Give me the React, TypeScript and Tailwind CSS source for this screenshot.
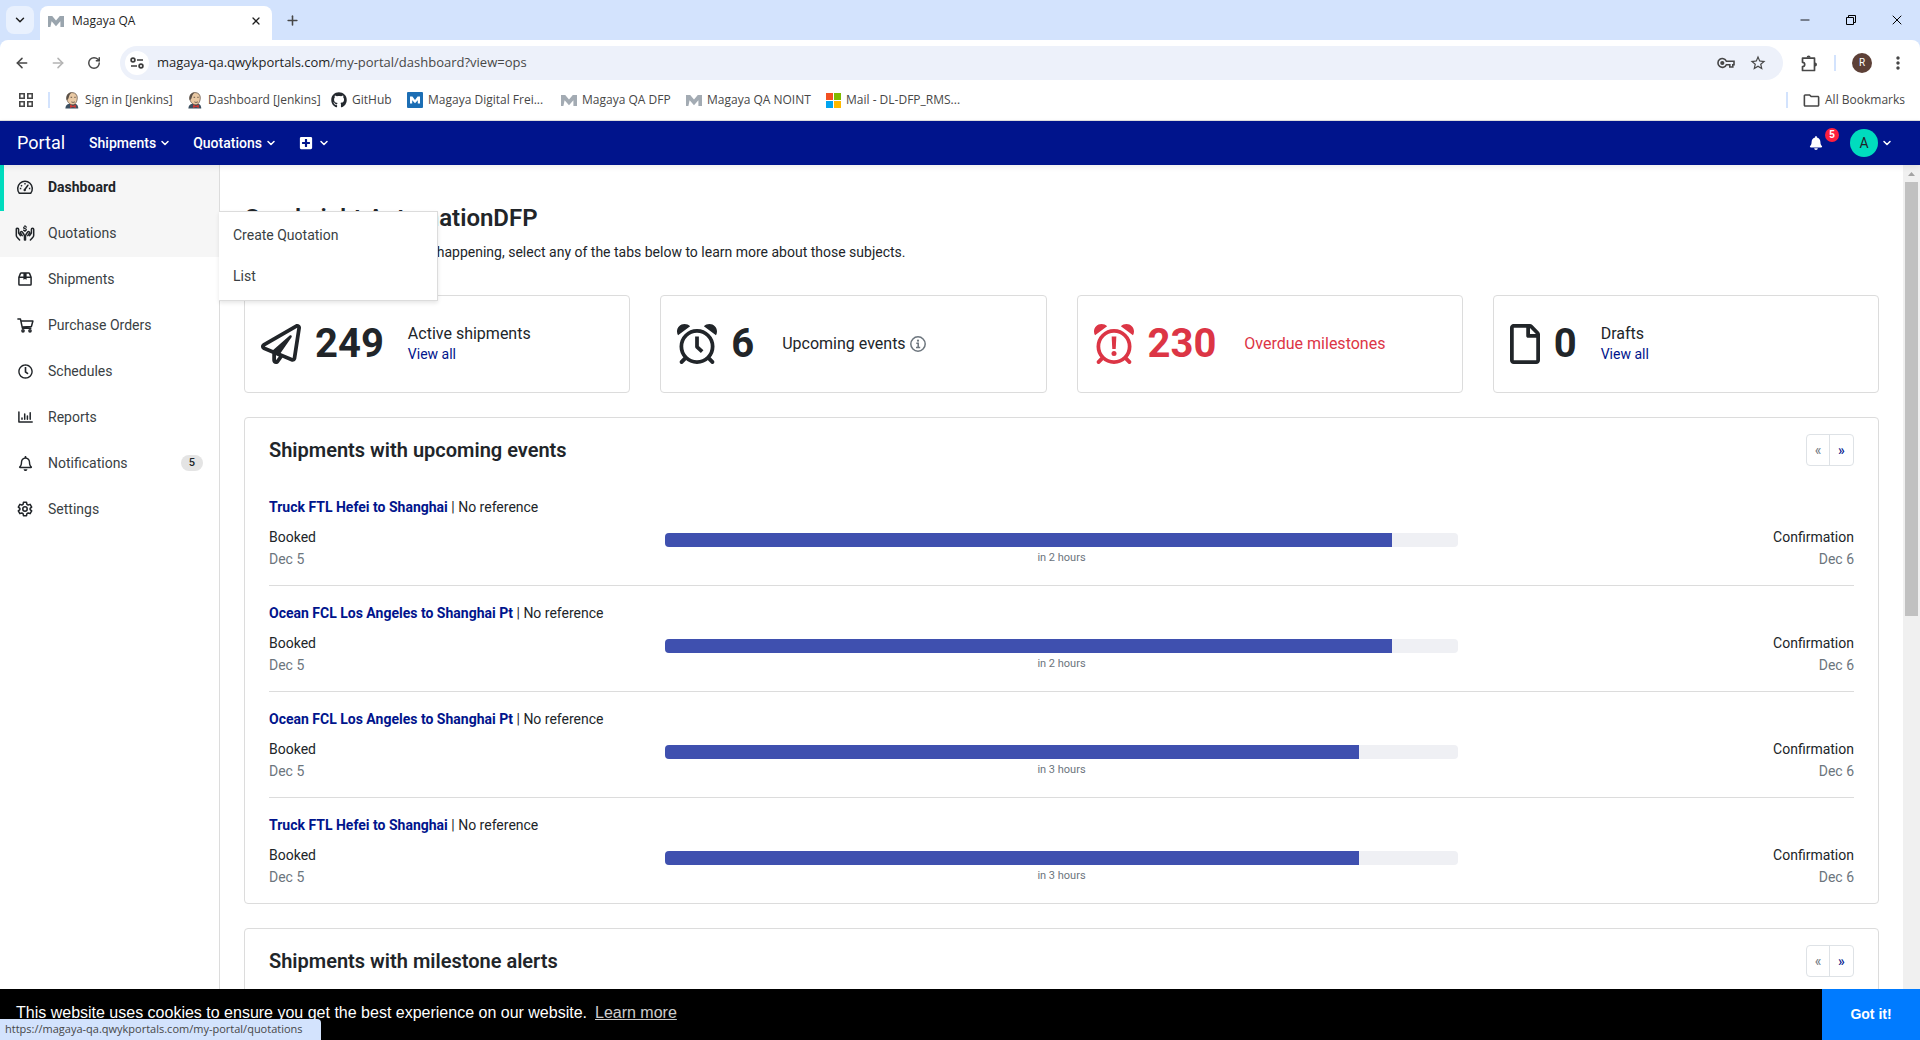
import React from "react";
import { ArrowLeft, ArrowRight, ChevronDown, Minus, Plus, RotateCw, X } from "lucide-react";
import { FaBell, FaGithub, FaPlusSquare, FaRegBell, FaRegClock, FaRegFile, FaRegPaperPlane } from "react-icons/fa";
import { MdMoreVert, MdOutlineFolder, MdStarBorder } from "react-icons/md";

type IconProps = { className?: string };

/* ---------- drawings ---------- */

function MagayaMark({ className = "" }: IconProps) {
  return (
    <svg viewBox="0 0 16 11" className={className} fill="currentColor" aria-hidden="true">
      <path d="M0 0h4.200L8 4.600 11.800 0H16v11h-3.600V5.200L8 10.200 3.600 5.200 2.400 11H0z" />
    </svg>
  );
}

function MagayaBox() {
  return (
    <svg viewBox="0 0 16 16" className="h-4 w-4" aria-hidden="true">
      <rect width="16" height="16" rx="1" fill="#1c6eb4" />
      <path d="M3 4.500h2.400L8 8l2.600-3.500H13v7h-2.200V8.200L8 11.300 5.200 8.200v3.300H3z" fill="#fff" />
    </svg>
  );
}

function Jenkins() {
  return (
    <svg viewBox="0 0 16 18" className="h-[17px] w-4" aria-hidden="true">
      <path d="M1 17.600c0-3 1.600-4.600 4.200-5.200l7 .4c1.700.8 2.400 2.600 2.400 4.800z" fill="#3b4f60" />
      <path d="M2.400 6C2.600 2.400 5 .6 8 .6c3.600 0 5.800 2.400 5.600 6-.2 3.400-2 7-4.800 7C5.200 13.600 2.300 9.800 2.400 6z" fill="#e9c9a4" stroke="#4d4036" strokeWidth=".7" />
      <path d="M2.300 8.500C1.600 4.200 3.400.9 7.600.6 5.600 2.400 4.900 4.200 4.500 6.200c-.3 1.300-1 2.300-2.200 2.300z" fill="#5a5048" />
      <path d="M6.500 5.600h1.600M10.400 5.600h1.500M7.400 10.500c1.200.7 2.600.6 3.600-.1" stroke="#4d4036" strokeWidth=".9" fill="none" />
      <path d="M6 13.200l3 1.500 3-1.500v3.800l-3-1.400L6 17z" fill="#d33833" />
    </svg>
  );
}

function MicrosoftSquares() {
  return (
    <svg viewBox="0 0 15 15" className="h-[15px] w-[15px]" aria-hidden="true">
      <path fill="#f25022" d="M0 0h7v7H0z" />
      <path fill="#7fba00" d="M8 0h7v7H8z" />
      <path fill="#00a4ef" d="M0 8h7v7H0z" />
      <path fill="#ffb900" d="M8 8h7v7H8z" />
    </svg>
  );
}

function AppsGrid() {
  return (
    <svg viewBox="0 0 14 14" className="h-3.5 w-3.5" fill="none" stroke="#474747" strokeWidth="1.600" aria-hidden="true">
      <path d="M.8.800h4.400v4.400H.8zM8.800.800h4.400v4.400H8.800zM.8 8.800h4.400v4.400H.8zM8.800 8.800h4.400v4.400H8.800z" />
    </svg>
  );
}

function SiteControls() {
  return (
    <svg viewBox="0 0 14 12" className="h-3 w-3.5" fill="none" stroke="#3c3c3c" strokeWidth="1.700" aria-hidden="true">
      <circle cx="3" cy="3" r="1.900" />
      <path d="M7 3h6M1 9h6" />
      <circle cx="11" cy="9" r="1.900" />
    </svg>
  );
}

function PasswordKey() {
  return (
    <svg viewBox="0 0 18 12" className="h-3 w-[18px]" fill="none" stroke="#474747" strokeWidth="1.600" aria-hidden="true">
      <path d="M9.400 4.200H17v3.500h-1.200V10h-3V7.700H9.400A4.400 4.400 0 1 1 9.400 4.200z" />
      <circle cx="5.300" cy="6" r="1.300" fill="#474747" />
    </svg>
  );
}

function PuzzlePiece() {
  return (
    <svg viewBox="0 0 17 17" className="h-[17px] w-[17px]" fill="none" stroke="#474747" strokeWidth="1.700" strokeLinejoin="round" aria-hidden="true">
      <path d="M1.500 3.200h12v12.300h-12v-3.800a2.200 2.200 0 0 0 0-4.400z" />
      <path d="M5.600 2.600a2 2 0 0 1 4 0zM14 7.400a2 2 0 0 1 0 4z" fill="#474747" stroke="none" />
    </svg>
  );
}

function GaugeIcon() {
  return (
    <svg viewBox="0 0 18 16" className="h-4 w-[18px]" fill="none" stroke="currentColor" strokeWidth="1.500" aria-hidden="true">
      <path d="M3.300 14.200A7.300 7.300 0 1 1 14.700 14.200z" strokeLinejoin="round" />
      <path d="M8.700 10.800l3.200-4.600" strokeLinecap="round" />
      <circle cx="8.700" cy="11" r="1.200" fill="currentColor" stroke="none" />
      <path d="M3.800 9.600h1.500M5 6.200l1 1M8.300 4.800h1.400M12.900 9.600h1.400" />
    </svg>
  );
}

function HandsDollarIcon() {
  return (
    <svg viewBox="0 0 20 16" className="h-4 w-5" fill="none" stroke="currentColor" strokeWidth="1.500" strokeLinecap="round" strokeLinejoin="round" aria-hidden="true">
      <path d="M3.600 8V4.200c0-1.400-2.300-1.400-2.300 0v6c0 1 .3 1.600 1 2.300L4.600 15M3.600 8l1.800 2.600M7.200 10.600L5.600 8.200c-.7-1.200.8-2.200 1.700-1.200l1.400 2c.6.900.8 1.500.8 2.500V15" />
      <path d="M16.400 8V4.200c0-1.400 2.300-1.400 2.300 0v6c0 1-.3 1.600-1 2.300L15.400 15M16.400 8l-1.800 2.600M12.800 10.600l1.600-2.400c.7-1.200-.8-2.200-1.700-1.200l-1.400 2c-.6.900-.8 1.500-.8 2.500V15" />
      <path d="M11.400 2.100c-.8-.6-2.800-.6-2.800.6s2.800.8 2.800 2-2 1.200-2.800.5M10 .7v.6M10 5.700v.7" strokeWidth="1.200" />
    </svg>
  );
}

function BoxIcon() {
  return (
    <svg viewBox="0 0 14 14" className="h-3.5 w-3.5" fill="none" stroke="currentColor" strokeWidth="1.500" strokeLinejoin="round" aria-hidden="true">
      <path d="M.9 5.200v7.100c0 .5.300.8.800.8h10.600c.5 0 .8-.3.800-.8V5.200L11.500 1.400a.9.900 0 0 0-.8-.5H3.300a.9.900 0 0 0-.8.5zM.9 5.200h12.200" />
      <path d="M5.400 1h3.200v6.800L7 6.900l-1.600.9z" fill="currentColor" stroke="none" />
    </svg>
  );
}

function CartIcon() {
  return (
    <svg viewBox="0 0 17 15" className="h-[15px] w-[17px]" fill="none" stroke="currentColor" strokeWidth="1.500" strokeLinejoin="round" strokeLinecap="round" aria-hidden="true">
      <path d="M.9.900h2.500l2 9.300h8.400M3.900 3h12l-1.500 5.500-9.300.4" />
      <circle cx="6" cy="12.800" r="1.100" />
      <circle cx="13" cy="12.800" r="1.100" />
    </svg>
  );
}

function ReportsIcon() {
  return (
    <svg viewBox="0 0 15 12" className="h-3 w-[15px]" fill="none" stroke="currentColor" strokeWidth="1.500" strokeLinecap="round" strokeLinejoin="round" aria-hidden="true">
      <path d="M.9.900v10.200h13.300M4 8.200V7M6.700 8.200V3M9.400 8.200V5M12.200 8.200V1.800" />
    </svg>
  );
}

function CogIcon() {
  return (
    <svg viewBox="0 0 24 24" className="h-4 w-4" fill="none" stroke="currentColor" strokeWidth="2.300" strokeLinejoin="round" aria-hidden="true">
      <path d="M9.700 2h4.600l.6 3 1.900 1.100 2.900-1 2.300 4-2.300 1.900v2l2.300 1.900-2.300 4-2.900-1-1.900 1.100-.6 3H9.700l-.6-3-1.900-1.100-2.900 1-2.300-4L4.300 13v-2L2 9.100l2.300-4 2.900 1L9.100 5z" />
      <circle cx="12" cy="12" r="3.300" />
    </svg>
  );
}

function AlarmIcon({ alert = false }: { alert?: boolean }) {
  return (
    <svg viewBox="0 0 512 512" className="h-10 w-10 shrink-0" fill="none" stroke="currentColor" strokeWidth="48" aria-hidden="true">
      <circle cx="256" cy="288" r="200" />
      <path d="M104 440l-44 46M408 440l44 46" strokeWidth="50" strokeLinecap="round" />
      <path d="M96 0C42 0 0 42 0 96c0 18 5 34 13 48L168 30C150 11 124 0 96 0zM416 0c54 0 96 42 96 96 0 18-5 34-13 48L344 30c18-19 44-30 72-30z" fill="currentColor" stroke="none" />
      {alert ? (
        <g fill="currentColor" stroke="none">
          <path d="M226 160h60l-8 160h-44z" />
          <circle cx="256" cy="376" r="32" />
        </g>
      ) : (
        <path d="M256 160v132l66 62" strokeLinejoin="round" />
      )}
    </svg>
  );
}

function InfoIcon() {
  return (
    <svg viewBox="0 0 16 16" className="h-4 w-4" fill="none" stroke="currentColor" strokeWidth="1.500" aria-hidden="true">
      <circle cx="8" cy="8" r="7.200" />
      <path d="M6.300 7.300H8.200v4M6 11.400h4.200" />
      <circle cx="8" cy="4.700" r="1.100" fill="currentColor" stroke="none" />
    </svg>
  );
}

/* ---------- browser window ---------- */

const bookmarks: { label: string; width: string; icon: React.ReactNode }[] = [
  { label: "Sign in [Jenkins]", width: "w-[123px]", icon: <Jenkins /> },
  { label: "Dashboard [Jenkins]", width: "w-[144px]", icon: <Jenkins /> },
  { label: "GitHub", width: "w-[76px]", icon: <FaGithub className="h-4 w-4 text-[#24292f]" /> },
  { label: "Magaya Digital Frei...", width: "w-[154px]", icon: <MagayaBox /> },
  { label: "Magaya QA DFP", width: "w-[125px]", icon: <MagayaMark className="h-[11px] w-4 text-[#a3abb3]" /> },
  { label: "Magaya QA NOINT", width: "w-[140px]", icon: <MagayaMark className="h-[11px] w-4 text-[#a3abb3]" /> },
  { label: "Mail - DL-DFP_RMS...", width: "w-[150px]", icon: <MicrosoftSquares /> },
];

function BrowserChrome() {
  return (
    <div className="shrink-0 bg-[#d3e3fd] font-['Open_Sans',sans-serif] text-xs text-[#1f1f1f]">
      <div className="flex h-10 items-end pl-1.5">
        <button aria-label="Search tabs" className="mb-1.5 grid h-7 w-7 place-items-center rounded-lg bg-[#e9f1fe]">
          <ChevronDown size={14} strokeWidth={2.5} />
        </button>
        <div className="ml-1.5 flex h-[34px] w-[232px] items-center gap-2 rounded-t-lg bg-white px-2 pb-1">
          <MagayaMark className="h-[11px] w-4 text-[#9aa5ae]" />
          <span className="flex-1">Magaya QA</span>
          <button aria-label="Close tab" className="grid h-4 w-4 place-items-center">
            <X size={12} strokeWidth={2.5} />
          </button>
        </div>
        <button aria-label="New tab" className="mb-3 ml-3 grid h-4 w-4 place-items-center text-[#474747]">
          <Plus size={15} strokeWidth={2.5} />
        </button>
        <div className="mb-3 ml-auto flex gap-[30px] pr-[15px] text-black">
          <button aria-label="Minimize" className="grid h-4 w-4 place-items-center">
            <Minus size={14} strokeWidth={1.5} />
          </button>
          <button aria-label="Restore" className="grid h-4 w-4 place-items-center">
            <svg viewBox="0 0 10 10" className="h-2.5 w-2.5" fill="none" stroke="currentColor" aria-hidden="true">
              <path d="M.5 2.500h7v7h-7zM2.500 2.500v-2h7v7h-2" />
            </svg>
          </button>
          <button aria-label="Close" className="grid h-4 w-4 place-items-center">
            <X size={16} strokeWidth={1.500} />
          </button>
        </div>
      </div>

      <div className="rounded-t-lg border-b border-[#e0e0e0] bg-white">
        <div className="flex h-[46px] items-center pr-3 pl-3.5">
          <button aria-label="Back" className="grid w-4 place-items-center text-[#474747]">
            <ArrowLeft size={16} strokeWidth={2.3} />
          </button>
          <button aria-label="Forward" className="ml-5 grid w-4 place-items-center text-[#b4b4b4]">
            <ArrowRight size={16} strokeWidth={2.3} />
          </button>
          <button aria-label="Reload" className="ml-5 grid w-4 place-items-center text-[#474747]">
            <RotateCw size={14} strokeWidth={2.500} />
          </button>
          <div className="ml-[18px] flex h-[34px] flex-1 items-center rounded-full bg-[#edf1fa] pr-4 pl-[5px]">
            <button aria-label="View site information" className="grid h-6 w-6 place-items-center rounded-full bg-white">
              <SiteControls />
            </button>
            <p className="ml-2 flex-1 text-[13px]">
              magaya-qa.qwykportals.com<span className="text-[#474747]">/my-portal/dashboard?view=ops</span>
            </p>
            <button aria-label="Manage passwords">
              <PasswordKey />
            </button>
            <button aria-label="Bookmark this tab" className="ml-3.5">
              <MdStarBorder className="h-[18px] w-[18px] text-[#474747]" />
            </button>
          </div>
          <button aria-label="Extensions" className="ml-[18px]">
            <PuzzlePiece />
          </button>
          <span className="ml-4 h-4 w-0.5 bg-[#d3e3fd]" />
          <button aria-label="Profile" className="ml-4 grid h-5 w-5 place-items-center rounded-full bg-[#5d4037] font-['Roboto',sans-serif] text-[10px] text-white">
            R
          </button>
          <button aria-label="Browser menu" className="ml-4">
            <MdMoreVert className="h-5 w-5 text-[#474747]" />
          </button>
        </div>

        <div className="flex h-[34px] items-start pt-0.5 pr-[15px] pl-[19px] text-[#474747]">
          <div className="flex h-6 flex-1 items-center">
            <button aria-label="Apps">
              <AppsGrid />
            </button>
            <span className="ml-[15px] h-4 w-0.5 bg-[#d3e3fd]" />
            <nav className="ml-3.5 flex flex-1 items-center" aria-label="Bookmarks">
              {bookmarks.map((b) => (
                <a key={b.label} href="#" className={`flex shrink-0 items-center gap-[5px] whitespace-nowrap ${b.width}`}>
                  {b.icon}
                  {b.label}
                </a>
              ))}
            </nav>
            <span className="h-4 w-0.5 bg-[#d3e3fd]" />
            <button className="ml-3.5 flex items-center gap-1 whitespace-nowrap">
              <MdOutlineFolder className="h-[19px] w-[19px]" />
              All Bookmarks
            </button>
          </div>
        </div>
      </div>
    </div>
  );
}

/* ---------- portal ---------- */

function Navbar() {
  return (
    <header className="relative z-10 flex h-11 shrink-0 items-center bg-[#00148c] pr-[27px] pl-[17px] text-sm font-medium text-white shadow-[0_2px_6px_rgba(0,0,0,0.08)]">
      <a href="#" className="text-lg leading-7 font-normal">Portal</a>
      <button className="ml-6 flex items-center gap-[3px]">
        Shipments
        <ChevronDown size={12} strokeWidth={3} />
      </button>
      <button className="ml-[22px] flex items-center gap-[3px]">
        Quotations
        <ChevronDown size={12} strokeWidth={3} />
      </button>
      <button aria-label="Create" className="ml-[22px] flex items-center gap-[5px]">
        <FaPlusSquare className="h-3.5 w-3.5" />
        <ChevronDown size={12} strokeWidth={3} />
      </button>
      <button aria-label="5 new notifications" className="relative mr-[27px] ml-auto">
        <FaBell className="h-3.5 w-3.5" />
        <span className="absolute -top-2 left-4 grid h-3.5 w-3.5 place-items-center rounded-full bg-[#ff1f3d] font-['Liberation_Sans',sans-serif] text-[10px] leading-none font-bold">
          5
        </span>
      </button>
      <button aria-label="Account" className="flex items-center gap-[3px]">
        <span className="grid h-7 w-7 place-items-center rounded-full bg-[#00dcbe] font-normal text-[#212529]">A</span>
        <ChevronDown size={12} strokeWidth={3} />
      </button>
    </header>
  );
}

const menu: { label: string; icon: React.ReactNode; badge?: string; current?: boolean; children?: string[] }[] = [
  { label: "Dashboard", icon: <GaugeIcon />, current: true },
  { label: "Quotations", icon: <HandsDollarIcon />, children: ["Create Quotation", "List"] },
  { label: "Shipments", icon: <BoxIcon /> },
  { label: "Purchase Orders", icon: <CartIcon /> },
  { label: "Schedules", icon: <FaRegClock className="h-[15px] w-[15px]" /> },
  { label: "Reports", icon: <ReportsIcon /> },
  { label: "Notifications", icon: <FaRegBell className="h-[15px] w-[15px]" />, badge: "5" },
  { label: "Settings", icon: <CogIcon /> },
];

function Sidebar() {
  return (
    <nav aria-label="Main" className="w-[220px] shrink-0 border-r border-[#dcdcdc] bg-white text-sm text-[#3a3f44]">
      <ul>
        {menu.map((m) => (
          <li key={m.label} className="relative">
            <a
              href="#"
              aria-current={m.current ? "page" : undefined}
              className={`flex h-[46px] items-center border-l-4 pr-4 pb-0.5 ${
                m.current
                  ? "border-[#00dcbe] bg-[#f6f6f6] font-bold text-[#212529]"
                  : m.children
                    ? "border-[#f6f6f6] bg-[#f6f6f6]"
                    : "border-white"
              }`}
            >
              <span className="mr-[13px] ml-[11px] grid w-5 place-items-center text-[#212529]">{m.icon}</span>
              {m.label}
              {m.badge && (
                <span className="ml-auto rounded-full bg-[#e4e4e4] px-2 text-[11px] leading-4 font-medium text-[#212529]">{m.badge}</span>
              )}
            </a>
            {m.children && (
              <ul className="absolute top-0 left-full z-10 w-[219px] border border-l-0 border-[#dcdcdc] bg-white pt-0.5 pb-1 shadow-[0_2px_4px_rgba(0,0,0,0.1)]">
                {m.children.map((c) => (
                  <li key={c}>
                    <a href="#" className="flex h-[41px] items-center pl-3.5">{c}</a>
                  </li>
                ))}
              </ul>
            )}
          </li>
        ))}
      </ul>
    </nav>
  );
}

function StatCard({ icon, value, label, link, info, danger }: { icon: React.ReactNode; value: string; label: string; link?: boolean; info?: boolean; danger?: boolean }) {
  return (
    <section className={`flex h-[98px] items-center rounded border border-[#dcdcdc] px-4 ${danger ? "text-[#dc3545]" : "text-[#212529]"}`}>
      {icon}
      <span className="ml-3.5 text-[40px] leading-10 font-bold">{value}</span>
      <div className={link ? "ml-6" : "ml-7"}>
        <p className="flex items-center gap-1 text-base leading-5">
          {label}
          {info && (
            <span className="text-[#6c757d]">
              <InfoIcon />
            </span>
          )}
        </p>
        {link && <a href="#" className="block text-sm leading-5 text-[#00148c]">View all</a>}
      </div>
    </section>
  );
}

function PanelHeader({ title }: { title: string }) {
  return (
    <div className="flex items-center justify-between">
      <h2 className="text-xl leading-8 font-semibold">{title}</h2>
      <div className="flex h-8 divide-x divide-[#dee2e6] rounded border border-[#dee2e6] text-sm">
        <button aria-label="Previous page" className="w-[23px] text-[#6c757d]" disabled>«</button>
        <button aria-label="Next page" className="w-[23px] font-medium text-[#00148c]">»</button>
      </div>
    </div>
  );
}

const shipments = [
  { title: "Truck FTL Hefei to Shanghai", due: "in 2 hours", progress: 91.7 },
  { title: "Ocean FCL Los Angeles to Shanghai Pt", due: "in 2 hours", progress: 91.7 },
  { title: "Ocean FCL Los Angeles to Shanghai Pt", due: "in 3 hours", progress: 87.5 },
  { title: "Truck FTL Hefei to Shanghai", due: "in 3 hours", progress: 87.5 },
];

function UpcomingEvents() {
  return (
    <section className="mt-6 rounded border border-[#dcdcdc] px-6 pt-4">
      <PanelHeader title="Shipments with upcoming events" />
      <ul className="mt-3.5 divide-y divide-[#dcdcdc] text-sm leading-[22px]">
        {shipments.map((s, i) => (
          <li key={i} className="pt-4 pb-[15px]">
            <p>
              <a href="#" className="font-bold text-[#00148c]">{s.title}</a> | No reference
            </p>
            <div className="mt-2 grid grid-cols-[1fr_2fr_1fr]">
              <div>
                <p>Booked</p>
                <p className="text-[#6c757d]">Dec 5</p>
              </div>
              <div className="pt-[7px]">
                <div role="progressbar" aria-label={s.title} aria-valuenow={s.progress} className="h-3.5 overflow-hidden rounded bg-[#eff0f4]">
                  <div className="h-full bg-[#3f50af]" style={{ width: `${s.progress}%` }} />
                </div>
                <p className="text-center text-[11px] text-[#6c757d]">{s.due}</p>
              </div>
              <div className="text-right">
                <p>Confirmation</p>
                <p className="text-[#6c757d]">Dec 6</p>
              </div>
            </div>
          </li>
        ))}
      </ul>
    </section>
  );
}

function Dashboard() {
  return (
    <main className="flex-1 overflow-hidden bg-white px-6 pt-[37px] text-[#212529]">
      <h1 className="text-2xl leading-8 font-semibold">Good night AutomationDFP</h1>
      <p className="mt-1.5 text-sm leading-6">
        To find out more about what is happening, select any of the tabs below to learn more about those subjects.
      </p>
      <div className="mt-[31px] grid grid-cols-4 gap-[30px]">
        <StatCard icon={<FaRegPaperPlane className="h-10 w-10 shrink-0" />} value="249" label="Active shipments" link />
        <StatCard icon={<AlarmIcon />} value="6" label="Upcoming events" info />
        <StatCard icon={<AlarmIcon alert />} value="230" label="Overdue milestones" danger />
        <StatCard icon={<FaRegFile className="h-10 w-[30px] shrink-0" />} value="0" label="Drafts" link />
      </div>
      <UpcomingEvents />
      <section className="mt-6 rounded border border-[#dcdcdc] px-6 pt-4 pb-24">
        <PanelHeader title="Shipments with milestone alerts" />
      </section>
    </main>
  );
}

function Scrollbar() {
  return (
    <div className="flex w-[17px] shrink-0 flex-col items-center bg-[#f0f0f0]" aria-hidden="true">
      <svg viewBox="0 0 17 17" className="h-[17px] w-[17px] shrink-0">
        <path d="M5 11l3.500-4 3.500 4z" fill="#a3a3a3" />
      </svg>
      <div className="h-[434px] w-[13px] bg-[#c1c1c1]" />
    </div>
  );
}

function CookieBar() {
  return (
    <div className="fixed inset-x-0 bottom-0 z-20 flex h-[51px] items-stretch bg-black font-['Liberation_Sans',sans-serif] text-base text-white">
      <p className="flex flex-1 items-center gap-2 pb-[3px] pl-4">
        This website uses cookies to ensure you get the best experience on our website.
        <a href="#" className="underline opacity-80">Learn more</a>
      </p>
      <button className="w-[98px] bg-[#007bff] pb-0.5 text-sm font-bold">Got it!</button>
      <span className="absolute bottom-0 left-0 flex h-[21px] items-center rounded-tr bg-[#d3e3fd] pr-[18px] pl-[5px] font-['Open_Sans',sans-serif] text-[11px] text-[#474747]">
        https://magaya-qa.qwykportals.com/my-portal/quotations
      </span>
    </div>
  );
}

export default function App() {
  return (
    <div className="flex h-screen flex-col overflow-hidden bg-white font-['Roboto',sans-serif]">
      <BrowserChrome />
      <Navbar />
      <div className="flex min-h-0 flex-1">
        <Sidebar />
        <Dashboard />
        <Scrollbar />
      </div>
      <CookieBar />
    </div>
  );
}
